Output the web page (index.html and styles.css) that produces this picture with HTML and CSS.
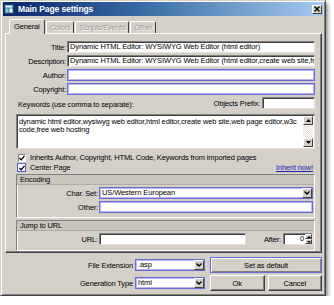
FILE: index.html
```html
<!DOCTYPE html>
<html lang="en">
<head>
    <meta charset="UTF-8">
    <meta name="viewport" content="width=device-width, initial-scale=1.0">
    <title>Main Page settings</title>
    <link rel="stylesheet" href="styles.css">
</head>
<body>
    <div class="window">
        <div class="titlebar">
            <svg class="app-icon" width="10" height="10" viewBox="0 0 10 10">
                <rect x="0.5" y="0.5" width="9" height="9" fill="#3a7fa8" stroke="#1c3f66"/>
                <rect x="1.5" y="1.5" width="7" height="2" fill="#e8f4ff"/>
                <rect x="1.5" y="4.5" width="3" height="4" fill="#7fd0c8"/>
                <rect x="5.5" y="4.5" width="3" height="4" fill="#f0f0f0"/>
            </svg>
            <span class="title">Main Page settings</span>
            <span class="close">
                <svg width="6" height="6" viewBox="0 0 6 6"><path d="M0.5 0.5 L5.5 5.5 M5.5 0.5 L0.5 5.5" stroke="#000" stroke-width="1.4"/></svg>
            </span>
        </div>

        <div class="tabs">
            <span class="tab active">General</span>
            <span class="tab">Colors</span>
            <span class="tab">Scripts/Events</span>
            <span class="tab">Other</span>
        </div>

        <div class="panel">
            <div class="row">
                <label>Title:</label>
                <div class="field">Dynamic HTML Editor: WYSIWYG Web Editor (html editor)</div>
            </div>
            <div class="row">
                <label>Description:</label>
                <div class="field">Dynamic HTML Editor: WYSIWYG Web Editor (html editor,create web site,fr</div>
            </div>
            <div class="row">
                <label>Author:</label>
                <div class="field hot"></div>
            </div>
            <div class="row">
                <label>Copyright:</label>
                <div class="field hot"></div>
            </div>
            <div class="row keywords-row">
                <span class="kw-label">Keywords (use comma to separate):</span>
                <span class="prefix-label">Objects Prefix:</span>
                <div class="field prefix"></div>
            </div>
            <div class="memo">
                <div class="memo-text">dynamic html editor,wysiwyg web editor,html editor,create web site,web page editor,w3c code,free web hosting</div>
                <div class="scrollbar">
                    <span class="sb-btn"><svg width="5" height="3" viewBox="0 0 5 3"><path d="M0 3 L2.5 0 L5 3 Z" fill="#000"/></svg></span>
                    <span class="sb-track"></span>
                    <span class="sb-btn"><svg width="5" height="3" viewBox="0 0 5 3"><path d="M0 0 L2.5 3 L5 0 Z" fill="#000"/></svg></span>
                </div>
            </div>
            <div class="check-row first">
                <span class="checkbox"><svg width="6" height="6" viewBox="0 0 6 6"><path d="M0.5 3 L2.2 4.8 L5.5 0.8" fill="none" stroke="#000" stroke-width="1.3"/></svg></span>
                <span>Inherits Author, Copyright, HTML Code, Keywords from imported pages</span>
            </div>
            <div class="check-row">
                <span class="checkbox hot"><svg width="6" height="6" viewBox="0 0 6 6"><path d="M0.5 3 L2.2 4.8 L5.5 0.8" fill="none" stroke="#000" stroke-width="1.3"/></svg></span>
                <span>Center Page</span>
                <a class="link" href="#">Inherit now!</a>
            </div>

            <div class="group">
                <div class="group-head">Encoding</div>
                <div class="group-row">
                    <label>Char. Set:</label>
                    <div class="field hot select">
                        <span class="value">US/Western European</span>
                        <span class="drop"><svg width="6" height="4" viewBox="0 0 6 4"><path d="M0.5 0.5 L3 3 L5.5 0.5" fill="none" stroke="#000" stroke-width="1.4"/></svg></span>
                    </div>
                </div>
                <div class="group-row">
                    <label>Other:</label>
                    <div class="field hot"></div>
                </div>
            </div>

            <div class="group jump">
                <div class="group-head">Jump to URL</div>
                <div class="group-row">
                    <label>URL:</label>
                    <div class="field url"></div>
                    <span class="after-label">After:</span>
                    <div class="field spin">
                        <span class="value">0</span>
                        <span class="spin-btns">
                            <span><svg width="4" height="2" viewBox="0 0 4 2"><path d="M0 2 L2 0 L4 2 Z" fill="#000"/></svg></span>
                            <span><svg width="4" height="2" viewBox="0 0 4 2"><path d="M0 0 L2 2 L4 0 Z" fill="#000"/></svg></span>
                        </span>
                    </div>
                </div>
            </div>
        </div>

        <div class="footer">
            <div class="ext-col">
                <label>File Extension</label>
                <div class="field hot select">
                    <span class="value">.asp</span>
                    <span class="drop"><svg width="6" height="4" viewBox="0 0 6 4"><path d="M0.5 0.5 L3 3 L5.5 0.5" fill="none" stroke="#000" stroke-width="1.4"/></svg></span>
                </div>
                <label>Generation Type</label>
                <div class="field hot select">
                    <span class="value">html</span>
                    <span class="drop"><svg width="6" height="4" viewBox="0 0 6 4"><path d="M0.5 0.5 L3 3 L5.5 0.5" fill="none" stroke="#000" stroke-width="1.4"/></svg></span>
                </div>
            </div>
            <div class="btn-col">
                <button type="button" class="btn default">Set as default</button>
                <button type="button" class="btn">Ok</button>
                <button type="button" class="btn">Cancel</button>
            </div>
        </div>
    </div>
</body>
</html>
```

FILE: styles.css
```css
body {
    margin: 0;
    background: #fff;
    font-family: "Liberation Sans", Arial, sans-serif;
    font-size: 7.5px;
    letter-spacing: -0.15px;
    color: #000;
}
.window {
    width: 326px;
    height: 296px;
    box-sizing: border-box;
    background: #d4d0c8;
    border: 1px solid;
    border-color: #d4d0c8 #404040 #404040 #d4d0c8;
    box-shadow: inset 1px 1px 0 #fff, inset -1px -1px 0 #808080, 2px 3px 4px rgba(0, 0, 0, 0.45);
    padding: 1px 2px 2px 2px;
    display: flex;
    flex-direction: column;
}
.titlebar {
    height: 14px;
    display: flex;
    align-items: center;
    gap: 4px;
    padding: 0 1px 0 1px;
    background: linear-gradient(to right, #0a246a, #3a6ea5 45%, #a6caf0);
    color: #fff;
    font-weight: bold;
    font-size: 8.5px;
    letter-spacing: -0.1px;
}
.app-icon {
    flex: none;
}
.title {
    flex: 1;
}
.close {
    width: 10px;
    height: 9px;
    box-sizing: border-box;
    background: #d4d0c8;
    border: 1px solid;
    border-color: #fff #404040 #404040 #fff;
    display: flex;
    align-items: center;
    justify-content: center;
}

/* onglets */
.tabs {
    height: 17px;
    display: flex;
    align-items: flex-end;
    padding-left: 6px;
    position: relative;
    z-index: 1;
}
.tab {
    height: 12px;
    box-sizing: border-box;
    padding: 0 3px;
    border: 1px solid;
    border-bottom: none;
    border-color: #fff #404040 transparent #fff;
    border-radius: 2px 2px 0 0;
    line-height: 11px;
    color: #9c9890;
    text-shadow: 1px 1px 0 #fff;
    margin-right: 1px;
}
.tab.active {
    height: 15px;
    margin-bottom: -1px;
    padding: 0 4px;
    line-height: 13px;
    background: #d4d0c8;
    color: #000;
    text-shadow: none;
}

.panel {
    height: 220px;
    box-sizing: border-box;
    margin: 0 1px 0 2px;
    border: 1px solid;
    border-color: #fff #404040 #404040 #fff;
    box-shadow: inset -1px -1px 0 #808080;
    padding: 7px 6px 0 0;
    display: flex;
    flex-direction: column;
}
.row {
    display: flex;
    align-items: center;
    height: 12px;
    margin-bottom: 2px;
}
.row label {
    width: 60px;
    text-align: right;
    margin-right: 1px;
    flex: none;
}
.field {
    flex: 1;
    height: 12px;
    box-sizing: border-box;
    background: #fff;
    border: 1px solid;
    border-color: #808080 #e4e1da #e4e1da #808080;
    box-shadow: inset 1px 1px 0 #404040;
    padding: 0 2px;
    line-height: 10px;
    white-space: nowrap;
    overflow: hidden;
    letter-spacing: -0.1px;
    text-align: left;
}
.field.hot {
    border-color: #6a6ad6;
    box-shadow: inset 0 0 0 1px #b8b8ee;
}
.keywords-row .kw-label {
    flex: 1;
    padding-left: 12px;
    align-self: flex-end;
    line-height: 8px;
}
.prefix-label {
    margin-right: 2px;
}
.field.prefix {
    flex: none;
    width: 53px;
}
.memo {
    height: 40px;
    margin: 3px 0 4px 10px;
    box-sizing: border-box;
    background: #fff;
    border: 1px solid;
    border-color: #808080 #e4e1da #e4e1da #808080;
    box-shadow: inset 1px 1px 0 #404040;
    display: flex;
}
.memo-text {
    flex: 1;
    padding: 3px 2px 0 2px;
    line-height: 8px;
}
.scrollbar {
    width: 10px;
    margin: 1px 1px 1px 0;
    display: flex;
    flex-direction: column;
    background: repeating-conic-gradient(#fff 0 25%, #e4e1da 0 50%) 0 0 / 2px 2px;
}
.sb-btn {
    height: 9px;
    box-sizing: border-box;
    background: #d4d0c8;
    border: 1px solid;
    border-color: #fff #404040 #404040 #fff;
    display: flex;
    align-items: center;
    justify-content: center;
}
.sb-track {
    flex: 1;
}

.check-row {
    display: flex;
    align-items: center;
    height: 10px;
    margin: 0 0 1px 12px;
    gap: 4px;
}
.checkbox {
    width: 8px;
    height: 8px;
    box-sizing: border-box;
    background: #fff;
    border: 1px solid;
    border-color: #808080 #fff #fff #808080;
    display: flex;
    align-items: center;
    justify-content: center;
}
.checkbox.hot {
    width: 9px;
    height: 9px;
    margin-left: -1px;
    border-color: #5a5ad0;
}
.link {
    margin-left: auto;
    margin-right: 2px;
    color: #2020b0;
}

.group {
    margin: 1px 0 1px 10px;
    border: 1px solid;
    border-color: #808080 #fff #fff #808080;
    box-shadow: inset 1px 1px 0 #fff, 1px 1px 0 #808080 inset;
    padding-bottom: 2px;
}
.group-head {
    height: 9px;
    line-height: 9px;
    padding-left: 3px;
    background: #c9c5bd;
    border-bottom: 1px solid #b0aca4;
    margin-bottom: 2px;
}
.group-row {
    display: flex;
    align-items: center;
    height: 12px;
    margin-bottom: 2px;
    padding-right: 1px;
}
.group-row label {
    width: 81px;
    text-align: right;
    margin-right: 1px;
    flex: none;
}
.group.jump .group-row {
    margin-top: 1px;
    margin-bottom: 3px;
}
.field.url {
    flex: none;
    width: 147px;
}
.after-label {
    flex: 1;
    text-align: right;
    margin-right: 2px;
}
.field.spin {
    flex: none;
    width: 30px;
    display: flex;
    padding: 0;
}
.spin .value {
    flex: 1;
    text-align: right;
    padding-right: 1px;
}
.spin-btns {
    width: 7px;
    display: flex;
    flex-direction: column;
}
.spin-btns span {
    flex: 1;
    background: #d4d0c8;
    border: 1px solid;
    border-color: #fff #404040 #404040 #fff;
    display: flex;
    align-items: center;
    justify-content: center;
}
.select {
    display: flex;
    padding-right: 0;
}
.select .value {
    flex: 1;
}
.drop {
    width: 10px;
    background: #d4d0c8;
    border: 1px solid;
    border-color: #fff #404040 #404040 #fff;
    box-sizing: border-box;
    display: flex;
    align-items: center;
    justify-content: center;
}

.footer {
    display: flex;
    justify-content: flex-end;
    gap: 5px;
    padding: 4px 1px 0 0;
}
.ext-col {
    display: grid;
    grid-template-columns: auto 70px;
    grid-auto-rows: 16px;
    row-gap: 2px;
    column-gap: 2px;
    align-items: center;
}
.ext-col label {
    text-align: right;
}
.btn-col {
    width: 112px;
    display: grid;
    grid-template-columns: 1fr 1fr;
    grid-auto-rows: 16px;
    gap: 2px 3px;
}
.btn {
    font: inherit;
    letter-spacing: inherit;
    color: #000;
    background: #d4d0c8;
    border: 1px solid;
    border-color: #fff #404040 #404040 #fff;
    box-shadow: inset -1px -1px 0 #808080;
    padding: 0;
    margin: 0;
}
.btn.default {
    grid-column: span 2;
    border-color: #6a6ad6;
    box-shadow: inset 1px 1px 0 #fff, inset -1px -1px 0 #808080;
}
```
